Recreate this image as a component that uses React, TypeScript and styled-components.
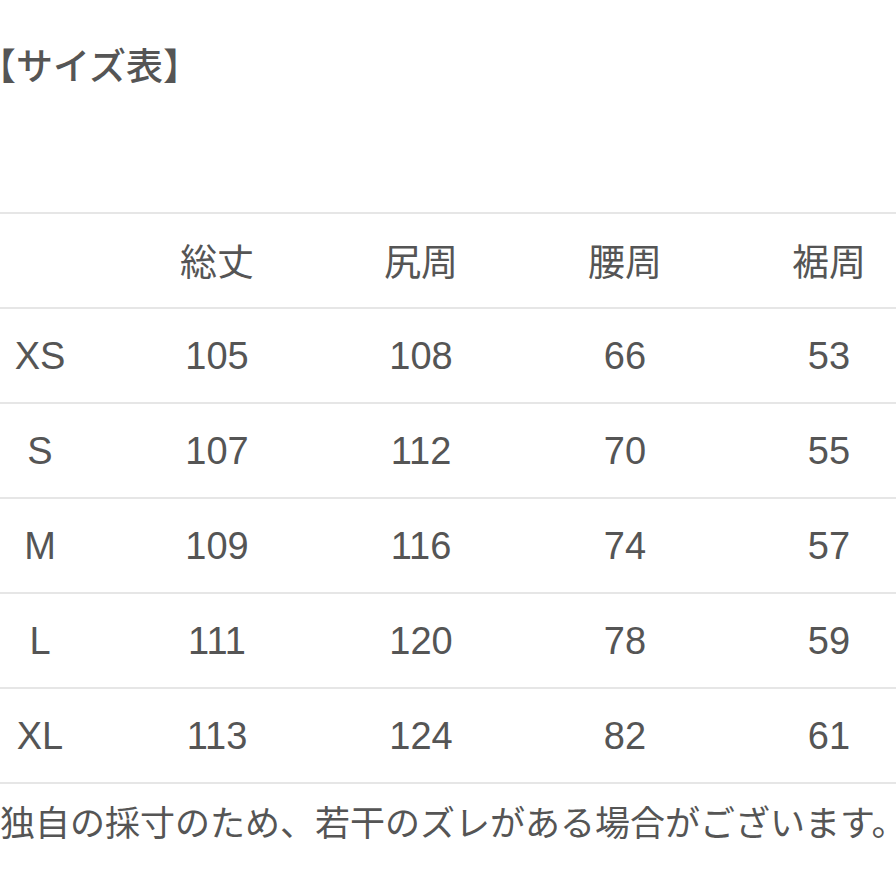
import React from "react";
import styled, { createGlobalStyle } from "styled-components";

const Global = createGlobalStyle`
  html, body {
    margin: 0;
    padding: 0;
    background: #ffffff;
  }
  body {
    font-family: "Liberation Sans", "Noto Sans CJK JP", sans-serif;
    color: #555555;
  }
`;

const Page = styled.div`
  width: 896px;
  height: 896px;
  overflow: hidden;
  background: #ffffff;
`;

const Title = styled.h2`
  margin: 46px 0 0 -21px;
  font-family: "Noto Sans CJK JP", sans-serif;
  font-size: 37px;
  font-weight: 500;
  line-height: 37px;
  height: 37px;
  color: #555555;
  white-space: nowrap;
`;

const Table = styled.div`
  margin: 129px 0 0 -35px;
  width: 966px;
  border-bottom: 2px solid #e6e6e6;
`;

const Row = styled.div`
  display: grid;
  grid-template-columns: 150px repeat(4, 204px);
  height: 93px;
  border-top: 2px solid #e6e6e6;
  align-items: center;
`;

const Cell = styled.div<{ $head?: boolean }>`
  text-align: center;
  font-family: ${(p) =>
    p.$head
      ? `"Noto Sans CJK JP", sans-serif`
      : `"Liberation Sans", "Noto Sans CJK JP", sans-serif`};
  font-size: ${(p) => (p.$head ? "37px" : "38px")};
  line-height: 1;
  color: #555555;
`;

const Note = styled.p`
  margin: 19px 0 0 0;
  font-family: "Noto Sans CJK JP", sans-serif;
  font-size: 35px;
  line-height: 35px;
  color: #555555;
  white-space: nowrap;
`;

const headers = ["", "総丈", "尻周", "腰周", "裾周"];
const rows: (string | number)[][] = [
  ["XS", 105, 108, 66, 53],
  ["S", 107, 112, 70, 55],
  ["M", 109, 116, 74, 57],
  ["L", 111, 120, 78, 59],
  ["XL", 113, 124, 82, 61],
];

export default function App() {
  return (
    <Page>
      <Global />
      <Title>【サイズ表】</Title>
      <Table>
        <Row>
          {headers.map((h, i) => (
            <Cell key={i} $head>
              {h}
            </Cell>
          ))}
        </Row>
        {rows.map((r) => (
          <Row key={String(r[0])}>
            {r.map((c, i) => (
              <Cell key={i}>{c}</Cell>
            ))}
          </Row>
        ))}
      </Table>
      <Note>独自の採寸のため、若干のズレがある場合がございます。</Note>
    </Page>
  );
}
